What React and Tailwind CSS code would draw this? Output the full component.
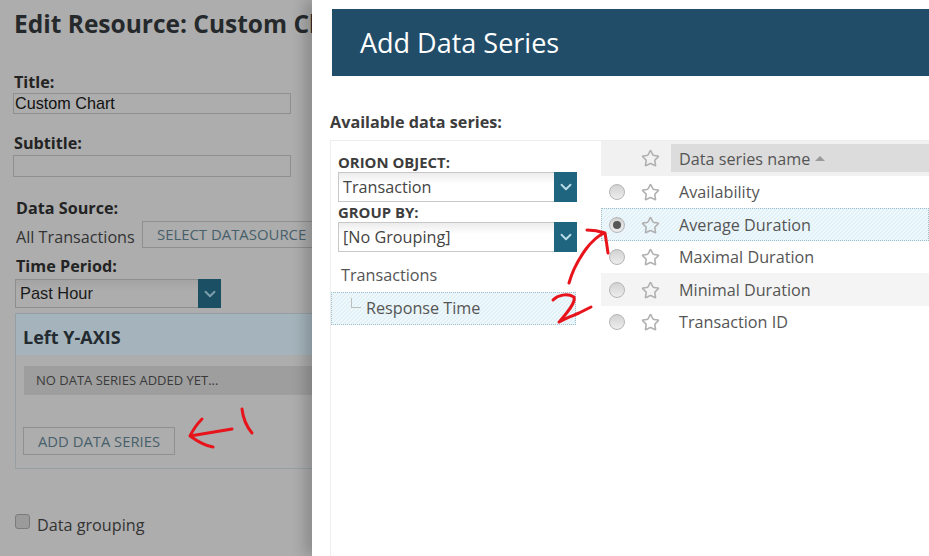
import { ChevronDown, Star } from 'lucide-react';

const font = "font-['Open_Sans',sans-serif]";
const stripes =
  'bg-[repeating-linear-gradient(135deg,#e1f1f7_0,#e1f1f7_1.414px,#eff8fb_1.414px,#eff8fb_2.828px)] outline-1 outline-dotted -outline-offset-1 outline-[#9dbdc9]';

const rows = [
  { name: 'Availability', h: 'h-8' },
  { name: 'Average Duration', h: 'h-[33px] pt-px', selected: true },
  { name: 'Maximal Duration', h: 'h-8' },
  { name: 'Minimal Duration', h: 'h-[33px] pt-px', shaded: true },
  { name: 'Transaction ID', h: 'h-8' },
];

function Select({ value, width, dim }) {
  return (
    <div
      className={`flex ${width} border ${
        dim
          ? 'h-[29px] border-[#8e8e8e] bg-[linear-gradient(#a3a3a3,#adadad_40%)] text-[#1a1a1a]'
          : 'h-[30px] border-[#c8c8c8] bg-[linear-gradient(#ececec,#ffffff_40%)] text-[#444444]'
      }`}
    >
      <span
        className={`flex-1 pl-1 ${
          dim ? "font-['Liberation_Sans',sans-serif] text-[16.4px] leading-[27px]" : 'text-[16.2px] leading-[28px]'
        }`}
      >
        {value}
      </span>
      <span
        className={`flex w-[23px] -my-px -mr-px items-center justify-center ${
          dim ? 'bg-[#1b4f63]' : 'bg-[#1f6580]'
        }`}
      >
        <ChevronDown size={18} strokeWidth={2.5} className={dim ? 'text-[#7fa0ad]' : 'text-[#b9dbe6]'} />
      </span>
    </div>
  );
}

function Radio({ selected }) {
  return (
    <span className="flex h-4 w-4 items-center justify-center rounded-full border border-[#b5b5b5] bg-[linear-gradient(#d2d2d2,#ededed)]">
      {selected && <span className="h-2 w-2 rounded-full bg-[#555555]" />}
    </span>
  );
}

function LeftPanel() {
  return (
    <div className="w-[312px] shrink-0 overflow-hidden bg-[#adadad] text-[#232323]">
      <div className="w-[700px]">
        <h1 className="pl-[14px] pt-[7px] text-[24.5px] font-bold leading-[34px] text-[#25292c]">
          Edit Resource: Custom Chart
        </h1>

        <div className="mt-[32px] pl-[14px] text-[16.2px] font-bold leading-[18px]">Title:</div>
        <div className="-ml-px mt-[2px] h-[21px] w-[278px] translate-x-[14px] border border-[#8f8f8f] pl-[1px] font-['Liberation_Sans',sans-serif] text-[16.2px] leading-[19px] text-[#111111]">
          Custom Chart
        </div>

        <div className="mt-[20px] pl-[14px] text-[16.2px] font-bold leading-[18px]">Subtitle:</div>
        <div className="-ml-px mt-[3px] h-[22px] w-[278px] translate-x-[14px] border border-[#8f8f8f]" />

        <div className="mt-[22px] pl-4 text-[16.2px] font-bold leading-[18px]">Data Source:</div>
        <div className="mt-[4px] flex h-[27px] items-center pl-4">
          <span className="w-[126px] pt-[5px] text-[16.2px] text-[#333333]">All Transactions</span>
          <span className="flex h-[27px] w-[240px] items-center border border-[#8f8f8f] pl-[14px] text-[14.9px] text-[#47606b]">
            SELECT DATASOURCE
          </span>
        </div>

        <div className="mt-[9px] pl-4 text-[16.2px] font-bold leading-[18px]">Time Period:</div>
        <div className="mt-[4px] pl-[15px]">
          <Select value="Past Hour" width="w-[206px]" dim />
        </div>

        <div className="ml-[15px] mt-[5px] h-[156px] w-[500px] border border-[#989fa3]">
          <div className="flex h-[41px] items-center bg-[#a5b4bc] pl-[7px] pt-[6px] text-[18px] font-bold text-[#232b30]">
            Left Y-AXIS
          </div>
          <div className="ml-2 mt-[11px] flex h-[29px] items-center bg-[#9e9e9e] pl-3 text-[13px] text-[#3a3a3a]">
            NO DATA SERIES ADDED YET...
          </div>
          <div className="ml-[7px] mt-8 flex h-[28px] w-[152px] items-center justify-center border border-[#8f8f8f] text-[14.8px] text-[#47606b]">
            ADD DATA SERIES
          </div>
        </div>

        <label className="mt-[45px] flex items-start pl-[15px]">
          <span className="h-[15px] w-[15px] rounded-[3px] border border-[#7c7c7c] bg-[#9b9b9b]" />
          <span className="-mt-px ml-[7px] text-[16.2px] text-[#333333]">Data grouping</span>
        </label>
      </div>
    </div>
  );
}

function DataSeriesTable() {
  return (
    <div className="w-[328px] shrink-0 text-[16.2px] text-[#555555]">
      <div className="flex h-[35px] bg-[#f1f1f1]">
        <div className="flex w-[70px] items-center justify-end pr-[11px]">
          <Star size={19} strokeWidth={2} className="text-[#b0b0b0]" />
        </div>
        <div className="mt-[3px] flex h-[28px] flex-1 items-center bg-[#dcdcdc] pl-2 pt-[3px]">
          Data series name
          <span className="mb-[2px] ml-[5px] h-0 w-0 border-x-[5px] border-b-[5px] border-x-transparent border-b-[#9a9a9a]" />
        </div>
      </div>
      {rows.map((row) => (
        <div
          key={row.name}
          className={`flex items-center ${row.h} ${row.selected ? stripes : ''} ${row.shaded ? 'bg-[#f4f4f4]' : ''}`}
        >
          <span className="flex w-6 justify-end">
            <Radio selected={row.selected} />
          </span>
          <span className="flex w-[46px] justify-end pr-[11px]">
            <Star size={19} strokeWidth={2} className="text-[#b0b0b0]" />
          </span>
          <span className="pl-2">{row.name}</span>
        </div>
      ))}
    </div>
  );
}

function Dialog() {
  return (
    <div className="relative h-full flex-1 bg-white pt-[9px] shadow-[-8px_0_12px_rgba(0,0,0,0.18)]">
      <div className="ml-5 flex h-[67px] items-center bg-[#214d69] pl-7 pt-[2px] text-[27px] text-white">
        Add Data Series
      </div>
      <div className="ml-[18px] mt-[36px] text-[16.2px] font-bold leading-[20px] text-[#3d3d3d]">
        Available data series:
      </div>
      <div className="ml-[18px] mt-2 flex h-[416px] border-l border-t border-[#eeeeee]">
        <div className="w-[270px] shrink-0">
          <div className="ml-[7px] mt-[12px] text-[14.9px] font-bold leading-[19px] text-[#3d3d3d]">ORION OBJECT:</div>
          <div className="ml-[7px]">
            <Select value="Transaction" width="w-[239px]" />
          </div>
          <div className="ml-[7px] mt-[1px] text-[14.9px] font-bold leading-[19px] text-[#3d3d3d]">GROUP BY:</div>
          <div className="ml-[7px]">
            <Select value="[No Grouping]" width="w-[239px]" />
          </div>
          <div className="ml-[10px] mt-[12px] text-[16.2px] leading-[22px] text-[#555555]">Transactions</div>
          <div className={`mt-[6px] flex h-[33px] w-[245px] ${stripes}`}>
            <span className="ml-5 mt-[6px] h-[10px] w-[10px] border-b border-l border-[#bdbdbd]" />
            <span className="ml-[5px] pt-1 text-[16.2px] text-[#555555]">Response Time</span>
          </div>
        </div>
        <DataSeriesTable />
      </div>
    </div>
  );
}

function Annotations() {
  return (
    <svg
      className="pointer-events-none absolute inset-0"
      width="929"
      height="556"
      fill="none"
      stroke="#e8141c"
      strokeWidth="3"
      strokeLinecap="round"
      strokeLinejoin="round"
    >
      <path d="M232 429 L190 436 M202 419 C197 424 193 430 190 436 C197 441 205 446 213 447" />
      <path d="M242 409 C243 418 247 427 252 433" />
      <path d="M569 283 C572 272 578 260 586 249 C592 241 598 236 604 233 M587 230 C593 230 599 231 605 233 C606 239 607 246 608 253" />
      <path d="M553 300 C558 295 567 293 574 297 C576 303 566 314 559 322 C566 318 572 316 579 313 C583 311 587 309 591 307" />
    </svg>
  );
}

export default function App() {
  return (
    <div className={`relative flex h-[556px] w-[929px] overflow-hidden bg-white ${font}`}>
      <LeftPanel />
      <Dialog />
      <Annotations />
    </div>
  );
}
